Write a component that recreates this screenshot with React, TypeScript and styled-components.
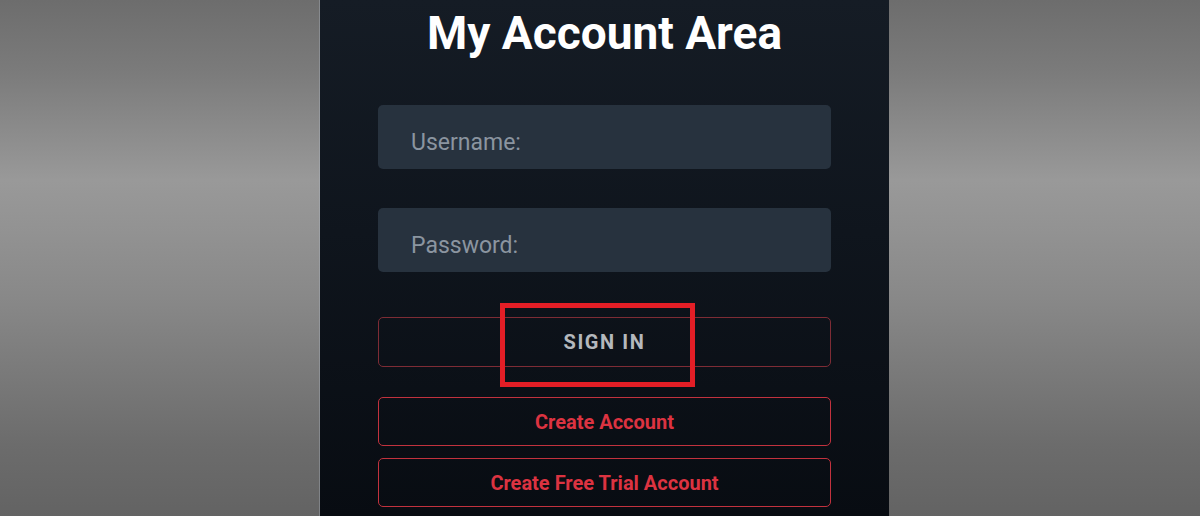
import styled, { createGlobalStyle } from 'styled-components';

const GlobalStyle = createGlobalStyle`
  html, body {
    margin: 0;
    padding: 0;
  }
  body {
    font-family: Roboto, "Liberation Sans", sans-serif;
  }
`;

const Page = styled.div`
  display: grid;
  grid-template-columns: 320px 569px 1fr;
  height: 516px;
  overflow: hidden;
  background: linear-gradient(
    180deg,
    #6d6d6d 0%,
    #7b7b7b 14%,
    #8f8f8f 28%,
    #999999 35%,
    #929292 45%,
    #888888 58%,
    #7a7a7a 72%,
    #6c6c6c 86%,
    #636363 100%
  );
`;

const Panel = styled.main`
  grid-column: 2;
  display: flex;
  flex-direction: column;
  padding: 0 58px;
  background: linear-gradient(180deg, #151c25 0%, #0f151d 45%, #080c12 100%);
  box-shadow: -1px 0 0 rgba(180, 190, 200, 0.35);
`;

const Title = styled.h1`
  margin: 6px 0 0;
  font-size: 46px;
  line-height: 54px;
  font-weight: 700;
  color: #ffffff;
  text-align: center;
`;

const Field = styled.input<{ $gap: number }>`
  box-sizing: border-box;
  width: 100%;
  height: 64px;
  margin-top: ${(p) => p.$gap}px;
  padding: 10px 33px 0;
  border: none;
  border-radius: 5px;
  background: #27323e;
  color: #e0e4e8;
  font-family: Roboto, "Liberation Sans", sans-serif;
  font-size: 23px;
  outline: none;

  &::placeholder {
    color: #8b95a0;
  }
`;

const SignInWrap = styled.div`
  position: relative;
  margin-top: 45px;
`;

const OutlineButton = styled.button<{ $tone: 'muted' | 'red'; $height: number }>`
  box-sizing: border-box;
  display: flex;
  align-items: center;
  justify-content: center;
  width: 100%;
  height: ${(p) => p.$height}px;
  border-radius: 5px;
  background: transparent;
  font-family: Roboto, "Liberation Sans", sans-serif;
  font-weight: 700;
  cursor: pointer;
  border: 1px solid ${(p) => (p.$tone === 'muted' ? '#7e2c35' : '#c2323e')};
  color: ${(p) => (p.$tone === 'muted' ? '#b4b8bd' : '#dc3341')};
  font-size: 20px;
  letter-spacing: ${(p) => (p.$tone === 'muted' ? '1.6px' : '0')};
`;

const Highlight = styled.div`
  position: absolute;
  left: 122px;
  top: -14px;
  width: 195px;
  height: 84px;
  box-sizing: border-box;
  border: 5px solid #e31e26;
  pointer-events: none;
`;

const ButtonStack = styled.div`
  display: flex;
  flex-direction: column;
  gap: 12px;
  margin-top: 30px;
`;

export default function App() {
  return (
    <>
      <GlobalStyle />
      <Page>
        <Panel>
          <Title>My Account Area</Title>
          <Field $gap={45} type="text" placeholder="Username:" />
          <Field $gap={39} type="password" placeholder="Password:" />
          <SignInWrap>
            <OutlineButton $tone="muted" $height={50}>SIGN IN</OutlineButton>
            <Highlight />
          </SignInWrap>
          <ButtonStack>
            <OutlineButton $tone="red" $height={49}>Create Account</OutlineButton>
            <OutlineButton $tone="red" $height={49}>Create Free Trial Account</OutlineButton>
          </ButtonStack>
        </Panel>
      </Page>
    </>
  );
}
